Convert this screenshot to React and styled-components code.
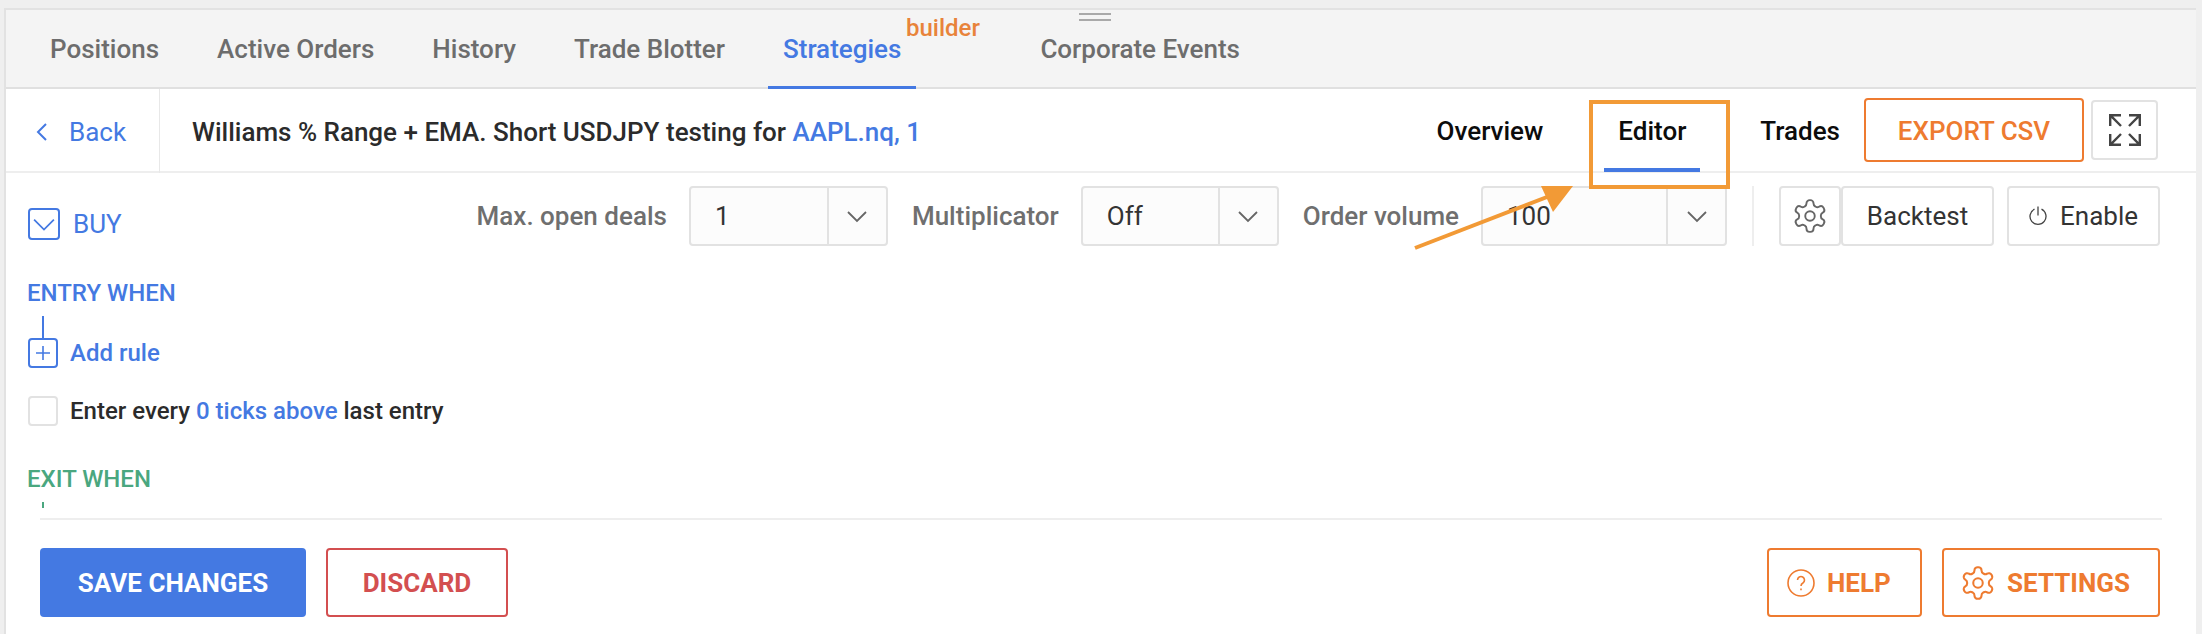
import React from 'react';
import styled, { createGlobalStyle } from 'styled-components';

const BLUE = '#4479e2';
const ORANGE = '#ee7b30';

const GlobalStyle = createGlobalStyle`
  html, body {
    margin: 0;
    padding: 0;
    background: #fff;
  }
  body {
    font-family: Roboto, "Liberation Sans", sans-serif;
    color: #2b2b2b;
  }
`;

const Page = styled.div`
  position: relative;
  width: 2202px;
  height: 634px;
  overflow: hidden;
  box-sizing: border-box;
  background: #efefef;
  padding: 8px 6px 0 4px;
`;

const Panel = styled.div`
  height: 626px;
  box-sizing: border-box;
  background: #fff;
  border-top: 2px solid #e2e2e2;
  border-left: 2px solid #e2e2e2;
`;

const TabBar = styled.div`
  position: relative;
  display: flex;
  height: 79px;
  box-sizing: border-box;
  background: #f4f4f4;
  border-bottom: 2px solid #e0e0e0;
  padding-left: 29px;
`;

const Tab = styled.div`
  display: flex;
  align-items: center;
  height: 79px;
  padding: 1px 15px 0;
  margin-right: ${(p) => p.$gap || 28}px;
  box-sizing: border-box;
  font-size: 26px;
  font-weight: 500;
  color: ${(p) => (p.$active ? BLUE : '#6d6d6d')};
  border-bottom: 3px solid ${(p) => (p.$active ? BLUE : 'transparent')};
`;

const Badge = styled.span`
  position: absolute;
  left: 900px;
  top: 4px;
  font-size: 24px;
  font-weight: 500;
  color: #e8833a;
`;

const Handle = styled.div`
  position: absolute;
  left: 1073px;
  top: 3px;
  width: 32px;
  height: 4px;
  border-top: 2px solid #a9a9a9;
  border-bottom: 2px solid #a9a9a9;
`;

const HeaderRow = styled.div`
  display: flex;
  align-items: center;
  height: 84px;
  box-sizing: border-box;
  border-bottom: 2px solid #eeeeee;
`;

const BackLink = styled.div`
  display: flex;
  align-items: center;
  gap: 16px;
  flex: none;
  width: 154px;
  height: 85px;
  box-sizing: border-box;
  padding: 3px 0 0 27px;
  border-right: 1px solid #e8e8e8;
  font-size: 26px;
  color: ${BLUE};
`;

const Title = styled.div`
  flex: 1;
  padding: 3px 0 0 32px;
  font-size: 26px;
  font-weight: 500;
  color: #2b2b2b;
  white-space: nowrap;
`;

const Link = styled.span`
  color: ${BLUE};
`;

const ViewTab = styled.div`
  position: relative;
  display: flex;
  align-items: center;
  height: 82px;
  box-sizing: border-box;
  padding: 2px 14px 0;
  margin-right: ${(p) => p.$mr}px;
  font-size: 26px;
  font-weight: 500;
  color: #0c0c0c;
`;

const ViewUnderline = styled.div`
  position: absolute;
  left: 0;
  right: 0;
  bottom: -1px;
  height: 4px;
  background: ${BLUE};
`;

const OutlineButton = styled.button`
  display: inline-flex;
  align-items: center;
  justify-content: ${(p) => (p.$pl ? 'flex-start' : 'center')};
  gap: ${(p) => p.$gap || 12}px;
  box-sizing: border-box;
  width: ${(p) => p.$w}px;
  height: ${(p) => p.$h || 69}px;
  background: #fff;
  border: 2px solid ${(p) => p.$color || ORANGE};
  border-radius: 4px;
  color: ${(p) => p.$color || ORANGE};
  font-family: inherit;
  font-size: 26px;
  font-weight: ${(p) => p.$weight || 700};
  padding: ${(p) => p.$pt || 0}px 0 0 ${(p) => p.$pl || 0}px;
`;

const IconButton = styled.button`
  display: inline-flex;
  align-items: center;
  justify-content: center;
  gap: ${(p) => p.$gap || 0}px;
  box-sizing: border-box;
  flex: none;
  width: ${(p) => p.$w}px;
  height: 60px;
  margin-left: ${(p) => p.$ml || 0}px;
  margin-right: ${(p) => p.$mr || 0}px;
  background: #fff;
  border: 2px solid #e2e2e2;
  border-radius: 4px;
  color: #333;
  font-family: inherit;
  font-size: 26px;
  padding: 0;
`;

const ControlRow = styled.div`
  display: flex;
  align-items: flex-start;
  padding: 13px 0 0 22px;
  height: 75px;
  box-sizing: border-box;
`;

const BuyToggle = styled.div`
  display: flex;
  align-items: center;
  gap: 13px;
  margin-top: 22px;
  font-size: 26px;
  color: ${BLUE};
`;

const SquareIcon = styled.div`
  display: flex;
  align-items: center;
  justify-content: center;
  flex: none;
  width: ${(p) => p.$w}px;
  height: ${(p) => p.$h}px;
  box-sizing: border-box;
  border: 2px solid ${(p) => p.$color || BLUE};
  border-radius: 4px;
  background: #fff;
`;

const Controls = styled.div`
  display: flex;
  align-items: center;
  margin-left: auto;
  height: 60px;
  margin-right: 36px;
`;

const Label = styled.div`
  font-size: 26px;
  font-weight: 500;
  color: #6f6f6f;
  margin-right: 22px;
  white-space: nowrap;
`;

const Select = styled.div`
  display: flex;
  flex: none;
  width: ${(p) => p.$w}px;
  height: 60px;
  box-sizing: border-box;
  border: 2px solid #e2e2e2;
  border-radius: 4px;
  background: #fcfcfc;
  margin-right: ${(p) => p.$mr || 24}px;
`;

const SelectValue = styled.div`
  flex: 1;
  display: flex;
  align-items: center;
  padding-left: 24px;
  font-size: 26px;
  color: #333;
`;

const SelectCaret = styled.div`
  display: flex;
  align-items: center;
  justify-content: center;
  width: 57px;
  border-left: 2px solid #e2e2e2;
`;

const VDivider = styled.div`
  width: 2px;
  height: 60px;
  background: #eeeeee;
  margin-right: 25px;
`;

const Rules = styled.div`
  height: 270px;
  box-sizing: border-box;
  padding: 31px 0 0 21px;
`;

const SectionTitle = styled.div`
  font-size: 24px;
  font-weight: 500;
  line-height: 28px;
  margin-top: ${(p) => p.$mt || 0}px;
  color: ${(p) => p.$color};
`;

const Connector = styled.div`
  width: 2px;
  height: ${(p) => p.$h}px;
  margin: 9px 0 0 15px;
  background: ${(p) => p.$color};
`;

const RuleRow = styled.div`
  display: flex;
  align-items: center;
  gap: 12px;
  margin-left: 1px;
  margin-top: ${(p) => p.$mt || 0}px;
  font-size: 24px;
  font-weight: 500;
  color: ${(p) => p.$color || '#2b2b2b'};
`;

const Footer = styled.div`
  margin: 0 34px;
  border-top: 2px solid #eeeeee;
  padding: 28px 2px 0 0;
  display: flex;
  gap: 20px;
`;

const SaveButton = styled.button`
  width: 266px;
  height: 69px;
  border: none;
  border-radius: 4px;
  background: ${BLUE};
  color: #fff;
  font-family: inherit;
  font-size: 26px;
  font-weight: 700;
  padding: 0;
`;

const Spacer = styled.div`
  flex: 1;
`;

const AnnotationBox = styled.div`
  position: absolute;
  left: 1589px;
  top: 100px;
  width: 141px;
  height: 89px;
  box-sizing: border-box;
  border: 4px solid #f29a36;
`;

const AnnotationArrow = styled.svg`
  position: absolute;
  left: 1400px;
  top: 170px;
`;

const Chevron = ({ size = 20, color = '#666', d = 'M1 6l9 9 9-9', sw = 1.8 }) => (
  <svg width={size} height={size} viewBox="0 0 20 20" fill="none" stroke={color} strokeWidth={sw}>
    <path d={d} />
  </svg>
);

const Gear = ({ size = 38, color = '#666', sw = 1.2 }) => (
  <svg width={size} height={size} viewBox="0 0 24 24" fill="none" stroke={color} strokeWidth={sw} strokeLinecap="round" strokeLinejoin="round">
    <circle cx="12" cy="12" r="3" />
    <path d="M12.22 2h-.44a2 2 0 0 0-2 2v.18a2 2 0 0 1-1 1.73l-.43.25a2 2 0 0 1-2 0l-.15-.08a2 2 0 0 0-2.73.73l-.22.38a2 2 0 0 0 .73 2.73l.15.1a2 2 0 0 1 1 1.72v.51a2 2 0 0 1-1 1.74l-.15.09a2 2 0 0 0-.73 2.73l.22.38a2 2 0 0 0 2.73.73l.15-.08a2 2 0 0 1 2 0l.43.25a2 2 0 0 1 1 1.73V20a2 2 0 0 0 2 2h.44a2 2 0 0 0 2-2v-.18a2 2 0 0 1 1-1.73l.43-.25a2 2 0 0 1 2 0l.15.08a2 2 0 0 0 2.73-.73l.22-.39a2 2 0 0 0-.73-2.73l-.15-.08a2 2 0 0 1-1-1.74v-.5a2 2 0 0 1 1-1.74l.15-.09a2 2 0 0 0 .73-2.73l-.22-.38a2 2 0 0 0-2.73-.73l-.15.08a2 2 0 0 1-2 0l-.43-.25a2 2 0 0 1-1-1.73V4a2 2 0 0 0-2-2z" />
  </svg>
);

const Expand = () => (
  <svg width="32" height="32" viewBox="0 0 32 32" fill="none" stroke="#444" strokeWidth="2.4">
    <path d="M1.2 12V1.2H12M1.2 1.2L12 12M30.8 12V1.2H20M30.8 1.2L20 12M1.2 20v10.8H12M1.2 30.8L12 20M30.8 20v10.8H20M30.8 30.8L20 20" />
  </svg>
);

const Power = () => (
  <svg width="18" height="20" viewBox="0 0 18 20" fill="none" stroke="#444" strokeWidth="1.3">
    <path d="M9 0.5v9M5.5 3.2a8 8 0 1 0 7 0" />
  </svg>
);

const Help = () => (
  <svg width="28" height="28" viewBox="0 0 28 28" fill="none" stroke={ORANGE} strokeWidth="1.6">
    <circle cx="14" cy="14" r="13" />
    <path d="M10.5 11a3.5 3.5 0 1 1 5.4 3c-1.3.8-1.9 1.4-1.9 3" />
    <path d="M14 19.5v1.8" />
  </svg>
);

const TABS = [
  { label: 'Positions' },
  { label: 'Active Orders' },
  { label: 'History' },
  { label: 'Trade Blotter' },
  { label: 'Strategies', active: true, gap: 109 },
  { label: 'Corporate Events' },
];

const App = () => {
  return (
    <Page>
      <GlobalStyle />
      <Panel>
        <TabBar>
          {TABS.map((t) => (
            <Tab key={t.label} $active={t.active} $gap={t.gap}>{t.label}</Tab>
          ))}
          <Badge>builder</Badge>
          <Handle />
        </TabBar>

        <HeaderRow>
          <BackLink>
            <Chevron size={20} color={BLUE} sw={2} d="M13 2l-8 8 8 8" />
            Back
          </BackLink>
          <Title>
            Williams % Range + EMA. Short USDJPY testing for <Link>AAPL.nq, 1</Link>
          </Title>
          <ViewTab $mr={47}>Overview</ViewTab>
          <ViewTab $mr={46}>Editor<ViewUnderline /></ViewTab>
          <ViewTab $mr={10}>Trades</ViewTab>
          <OutlineButton $w={220} $h={64} $weight={500} $pt={2}>EXPORT CSV</OutlineButton>
          <IconButton $w={67} $ml={7} $mr={38}><Expand /></IconButton>
        </HeaderRow>

        <ControlRow>
          <BuyToggle>
            <SquareIcon $w={32} $h={32}>
              <Chevron size={22} color={BLUE} sw={1.6} d="M1 6l9 9 9-9" />
            </SquareIcon>
            BUY
          </BuyToggle>
          <Controls>
            <Label>Max. open deals</Label>
            <Select $w={199}>
              <SelectValue>1</SelectValue>
              <SelectCaret><Chevron /></SelectCaret>
            </Select>
            <Label>Multiplicator</Label>
            <Select $w={198}>
              <SelectValue>Off</SelectValue>
              <SelectCaret><Chevron /></SelectCaret>
            </Select>
            <Label>Order volume</Label>
            <Select $w={246} $mr={25}>
              <SelectValue>100</SelectValue>
              <SelectCaret><Chevron /></SelectCaret>
            </Select>
            <VDivider />
            <IconButton $w={62}><Gear /></IconButton>
            <IconButton $w={153}>Backtest</IconButton>
            <IconButton $w={153} $gap={13} $ml={13}><Power />Enable</IconButton>
          </Controls>
        </ControlRow>

        <Rules>
          <SectionTitle $color={BLUE}>ENTRY WHEN</SectionTitle>
          <Connector $h={22} $color={BLUE} />
          <RuleRow $color={BLUE}>
            <SquareIcon $w={30} $h={30}>
              <svg width="14" height="14" viewBox="0 0 14 14" stroke={BLUE} strokeWidth="1.6"><path d="M7 0v14M0 7h14" /></svg>
            </SquareIcon>
            Add rule
          </RuleRow>
          <RuleRow $mt={28}>
            <SquareIcon $w={30} $h={30} $color="#e2e2e2" />
            <span>Enter every <Link>0 ticks above</Link> last entry</span>
          </RuleRow>
          <SectionTitle $color="#4aa77f" $mt={39}>EXIT WHEN</SectionTitle>
          <Connector $h={6} $color="#4aa77f" />
        </Rules>

        <Footer>
          <SaveButton>SAVE CHANGES</SaveButton>
          <OutlineButton $w={182} $color="#d34f50">DISCARD</OutlineButton>
          <Spacer />
          <OutlineButton $w={155} $pl={18}><Help />HELP</OutlineButton>
          <OutlineButton $w={218} $pl={15} $gap={10}><Gear size={38} color={ORANGE} sw={1.3} />SETTINGS</OutlineButton>
        </Footer>
      </Panel>

      <AnnotationBox />
      <AnnotationArrow width="190" height="90" viewBox="0 0 190 90">
        <path d="M15 78L160 22" stroke="#f29a36" strokeWidth="4" fill="none" />
        <path d="M173 16L141 16L153 42Z" fill="#f29a36" />
      </AnnotationArrow>
    </Page>
  );
};

export default App;
